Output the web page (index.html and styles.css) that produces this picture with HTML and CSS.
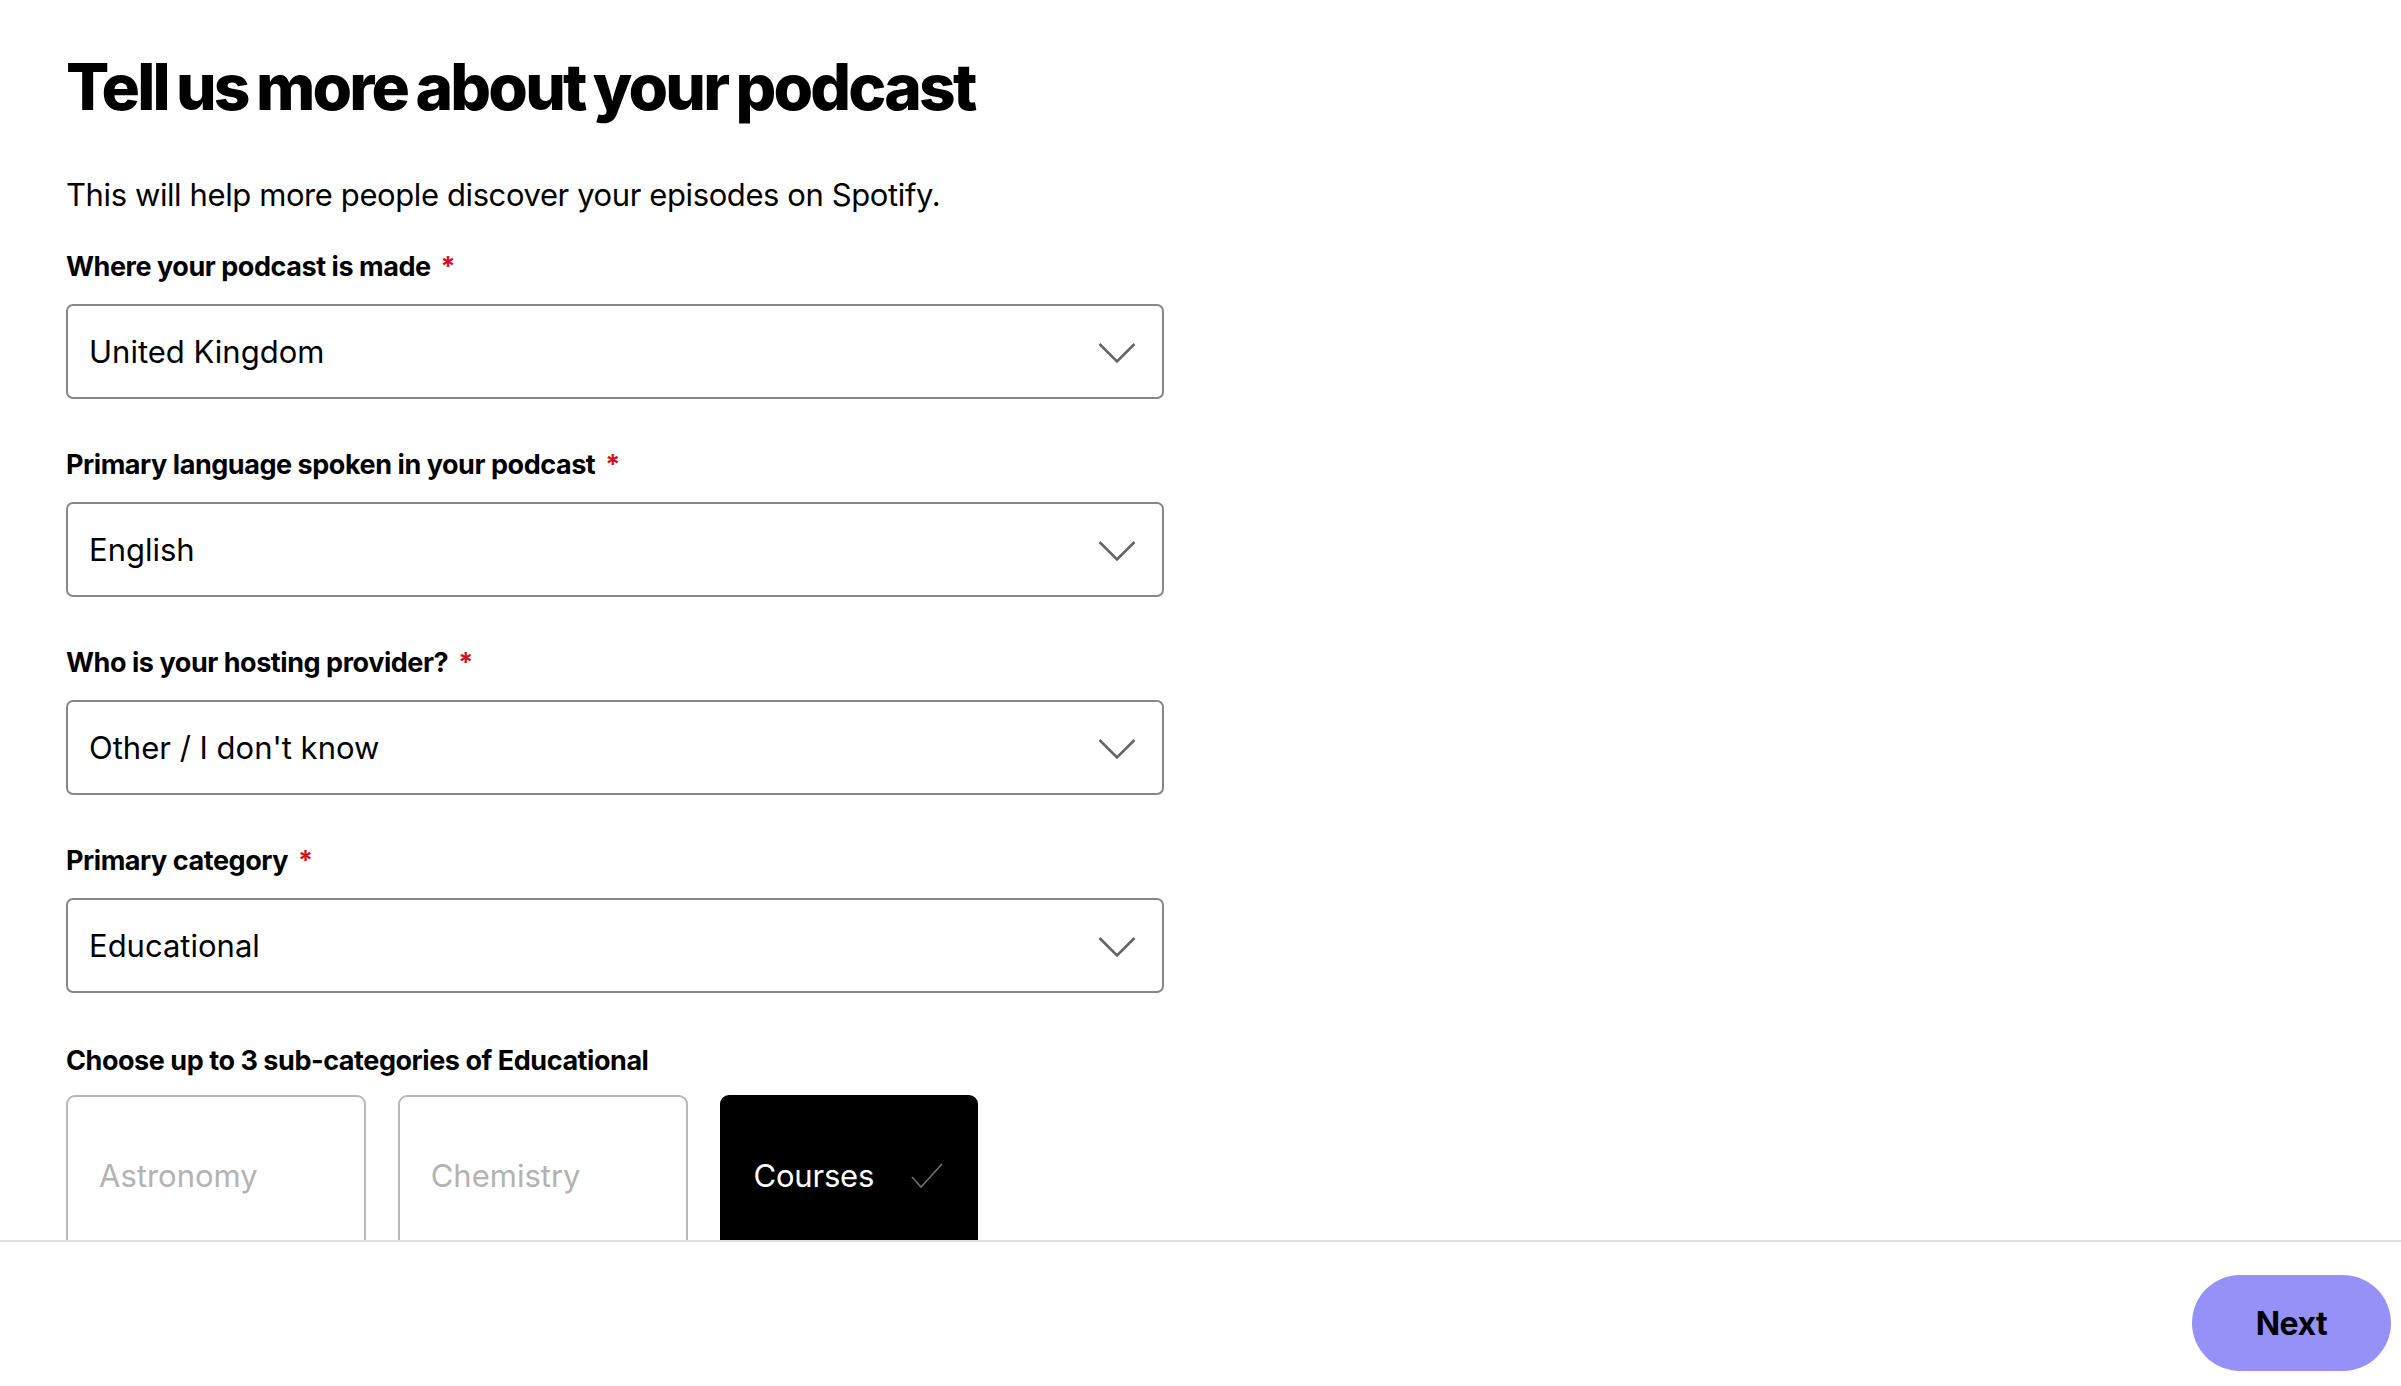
FILE: index.html
```html
<!DOCTYPE html>
<html lang="en">
<head>
  <meta charset="UTF-8">
  <title>Tell us more about your podcast</title>
  <link rel="stylesheet" href="styles.css">
</head>
<body>
  <div class="screen">
    <main class="content">
      <h1>Tell us more about your podcast</h1>
      <p class="intro">This will help more people discover your episodes on Spotify.</p>

      <div class="field">
        <label class="label">Where your podcast is made <span class="req">*</span></label>
        <div class="select">
          <span>United Kingdom</span>
          <svg class="chevron" width="38" height="22" viewBox="0 0 38 22"><path d="M1.5 2 L19 19.5 L36.5 2" fill="none" stroke="#666" stroke-width="2.6"/></svg>
        </div>
      </div>

      <div class="field">
        <label class="label">Primary language spoken in your podcast <span class="req">*</span></label>
        <div class="select">
          <span>English</span>
          <svg class="chevron" width="38" height="22" viewBox="0 0 38 22"><path d="M1.5 2 L19 19.5 L36.5 2" fill="none" stroke="#666" stroke-width="2.6"/></svg>
        </div>
      </div>

      <div class="field">
        <label class="label">Who is your hosting provider? <span class="req">*</span></label>
        <div class="select">
          <span>Other / I don't know</span>
          <svg class="chevron" width="38" height="22" viewBox="0 0 38 22"><path d="M1.5 2 L19 19.5 L36.5 2" fill="none" stroke="#666" stroke-width="2.6"/></svg>
        </div>
      </div>

      <div class="field">
        <label class="label">Primary category <span class="req">*</span></label>
        <div class="select">
          <span>Educational</span>
          <svg class="chevron" width="38" height="22" viewBox="0 0 38 22"><path d="M1.5 2 L19 19.5 L36.5 2" fill="none" stroke="#666" stroke-width="2.6"/></svg>
        </div>
      </div>

      <div class="field subcats">
        <label class="label">Choose up to 3 sub-categories of Educational</label>
        <div class="chips">
          <div class="chip">
            <span>Astronomy</span>
            <svg class="check" width="32" height="26" viewBox="0 0 32 26"><path d="M1 14 L10 24 L31 1" fill="none" stroke="currentColor" stroke-width="1.6"/></svg>
          </div>
          <div class="chip">
            <span>Chemistry</span>
            <svg class="check" width="32" height="26" viewBox="0 0 32 26"><path d="M1 14 L10 24 L31 1" fill="none" stroke="currentColor" stroke-width="1.6"/></svg>
          </div>
          <div class="chip selected">
            <span>Courses</span>
            <svg class="check" width="32" height="26" viewBox="0 0 32 26"><path d="M1 14 L10 24 L31 1" fill="none" stroke="currentColor" stroke-width="1.6"/></svg>
          </div>
        </div>
      </div>
    </main>

    <footer class="footer">
      <button class="next">Next</button>
    </footer>
  </div>
</body>
</html>
```

FILE: styles.css
```css
html, body {
  margin: 0;
  height: 100%;
}

body {
  font-family: Inter, "Noto Sans", sans-serif;
  color: #000;
  background: #fff;
}

.screen {
  display: flex;
  flex-direction: column;
  height: 100vh;
}

.content {
  flex: 1;
  overflow: hidden;
  padding: 51px 0 0 66px;
  width: 1098px;
}

h1 {
  margin: 0;
  font-size: 64px;
  line-height: 72px;
  font-weight: 800;
  letter-spacing: -2.8px;
  word-spacing: -3px;
}

.intro {
  margin: 52px 0 0;
  font-size: 31px;
  line-height: 40px;
  letter-spacing: -0.4px;
}

.field {
  margin-top: 36px;
}

.field + .field {
  margin-top: 50px;
}

.label {
  display: block;
  font-size: 27px;
  line-height: 32px;
  font-weight: 700;
  letter-spacing: -0.45px;
  margin-bottom: 21px;
}

.req {
  color: #d31225;
  margin-left: 4px;
}

.select {
  height: 95px;
  box-sizing: border-box;
  border: 2px solid #878787;
  border-radius: 7px;
  display: flex;
  align-items: center;
  justify-content: space-between;
  padding: 0 26px 0 21px;
  font-size: 31px;
  letter-spacing: 0;
}

.chevron {
  display: block;
  margin-top: 2px;
}

.field.subcats {
  margin-top: 52px;
}

.subcats .label {
  margin-bottom: 18px;
}

.chips {
  display: flex;
  gap: 32px;
}

.chip {
  height: 160px;
  box-sizing: border-box;
  border: 2px solid #b8b8b8;
  border-radius: 9px;
  display: flex;
  align-items: center;
  gap: 41px;
  padding: 0 33px 0 31px;
  font-size: 31px;
  letter-spacing: 0;
  color: #b3b3b3;
  white-space: nowrap;
}

.chip .check {
  color: transparent;
  margin-top: 2px;
}

.chip.selected {
  background: #000;
  border-color: #000;
  color: #fff;
  gap: 37px;
  letter-spacing: -0.2px;
}

.chip.selected .check {
  color: #707070;
}

.footer {
  height: 146px;
  box-sizing: border-box;
  border-top: 2px solid #dedede;
  display: flex;
  justify-content: flex-end;
  align-items: flex-start;
  padding: 33px 10px 0 0;
  background: #fff;
}

.next {
  width: 199px;
  height: 96px;
  border: none;
  border-radius: 48px;
  background: #9691f6;
  color: #000;
  font-family: Inter, sans-serif;
  font-size: 32px;
  font-weight: 700;
  letter-spacing: -0.5px;
  cursor: pointer;
}
```
